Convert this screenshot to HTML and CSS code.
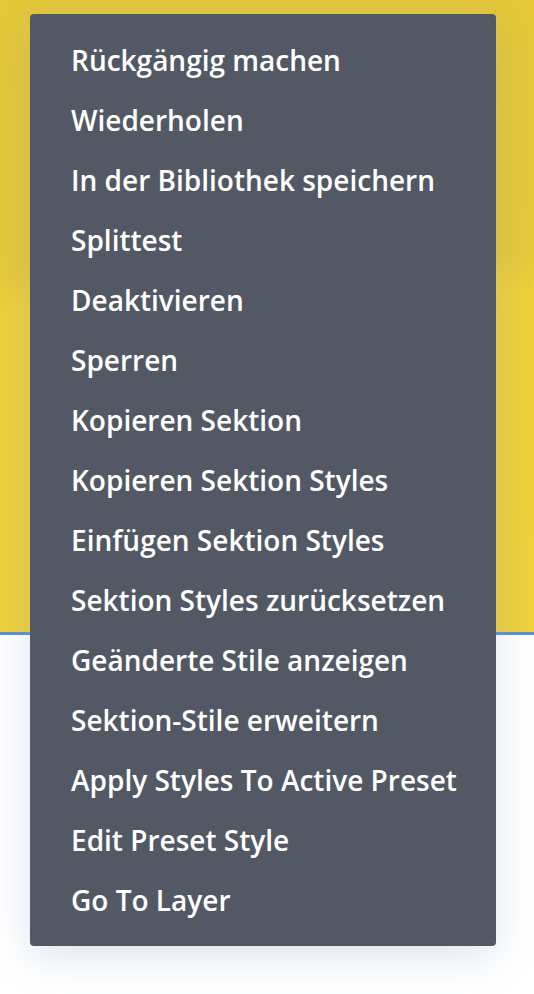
FILE: index.html
```html
<!DOCTYPE html>
<html lang="de">
<head>
<meta charset="utf-8">
<link rel="stylesheet" href="styles.css">
</head>
<body>
<div class="page">
  <div class="hero"></div>
  <div class="rule"></div>
  <div class="below"></div>
  <ul class="menu">
    <li>Rückgängig machen</li>
    <li>Wiederholen</li>
    <li>In der Bibliothek speichern</li>
    <li>Splittest</li>
    <li>Deaktivieren</li>
    <li>Sperren</li>
    <li>Kopieren Sektion</li>
    <li>Kopieren Sektion Styles</li>
    <li>Einfügen Sektion Styles</li>
    <li>Sektion Styles zurücksetzen</li>
    <li>Geänderte Stile anzeigen</li>
    <li>Sektion-Stile erweitern</li>
    <li>Apply Styles To Active Preset</li>
    <li>Edit Preset Style</li>
    <li>Go To Layer</li>
  </ul>
</div>
</body>
</html>
```

FILE: styles.css
```css
html, body {
  margin: 0;
  padding: 0;
  height: 100%;
}
body {
  font-family: "Open Sans", "Noto Sans", sans-serif;
  background: #ffffff;
}
.page {
  position: relative;
  width: 534px;
  height: 994px;
  overflow: hidden;
}
.hero {
  height: 632px;
  background:
    linear-gradient(178deg, #e5c737 0%, #e6c838 42%, #efd13a 48%, #efd13b 100%);
}
.rule {
  height: 3px;
  background: #5b8fd8;
}
.below {
  height: 359px;
  background: #ffffff;
}
.menu {
  position: absolute;
  left: 30px;
  top: 14px;
  width: 466px;
  height: 932px;
  box-sizing: border-box;
  margin: 0;
  padding: 16px 0 0 41px;
  list-style: none;
  background: #525965;
  border-radius: 4px;
  box-shadow: 0 10px 40px rgba(120, 150, 200, 0.25);
}
.menu li {
  height: 60px;
  line-height: 60px;
  font-size: 28px;
  font-weight: 600;
  color: #ffffff;
  white-space: nowrap;
}
```
